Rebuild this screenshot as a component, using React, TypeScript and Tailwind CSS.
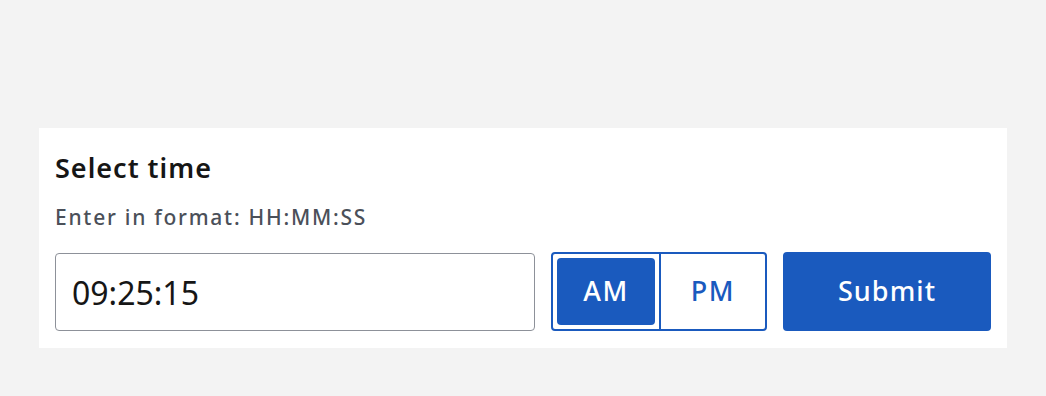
import React from 'react';

const BLUE = 'bg-[#1a5abe]';

const App: React.FC = () => {
  const [period, setPeriod] = React.useState<'AM' | 'PM'>('AM');
  const [value, setValue] = React.useState('09:25:15');

  return (
    <div className="min-h-screen w-full bg-[#f3f3f3] pt-[128px] pl-[39px] pr-[39px] font-['Noto_Sans',sans-serif]">
      <div className="w-[968px] h-[220px] bg-white px-4 pt-[22px] pb-[17px] flex flex-col">
        <h2 className="text-[27px] leading-[36px] font-semibold tracking-[0.037em] text-[#161616]">Select time</h2>
        <p className="mt-[17px] text-[21px] leading-[28px] font-medium tracking-[0.083em] text-[#4b5059]">Enter in format: HH:MM:SS</p>

        <div className="mt-auto flex items-stretch gap-4 h-[79px]">
          <input
            value={value}
            onChange={(e) => setValue(e.target.value)}
            className="w-[480px] h-[78px] mt-px rounded-[4px] border border-[#8d9199] px-4 text-[32px] text-[#161616] outline-none"
          />

          <div className="w-[216px] flex rounded-[4px] border-2 border-[#1a5abe]">
            <div className="w-[106px] p-1">
              <button
                onClick={() => setPeriod('AM')}
                className={`w-full h-full rounded-[4px] text-[27px] font-medium tracking-[0.06em] ${
                  period === 'AM' ? `${BLUE} text-white` : 'bg-white text-[#1a5abe]'
                }`}
              >
                AM
              </button>
            </div>
            <div className="w-[2px] bg-[#1a5abe]" />
            <div className="flex-1 p-1">
              <button
                onClick={() => setPeriod('PM')}
                className={`w-full h-full rounded-[4px] text-[27px] font-medium tracking-[0.06em] ${
                  period === 'PM' ? `${BLUE} text-white` : 'bg-white text-[#1a5abe]'
                }`}
              >
                PM
              </button>
            </div>
          </div>

          <button className={`w-[208px] rounded-[4px] ${BLUE} text-white text-[27px] font-medium tracking-[0.04em]`}>
            Submit
          </button>
        </div>
      </div>
    </div>
  );
};

export default App;
